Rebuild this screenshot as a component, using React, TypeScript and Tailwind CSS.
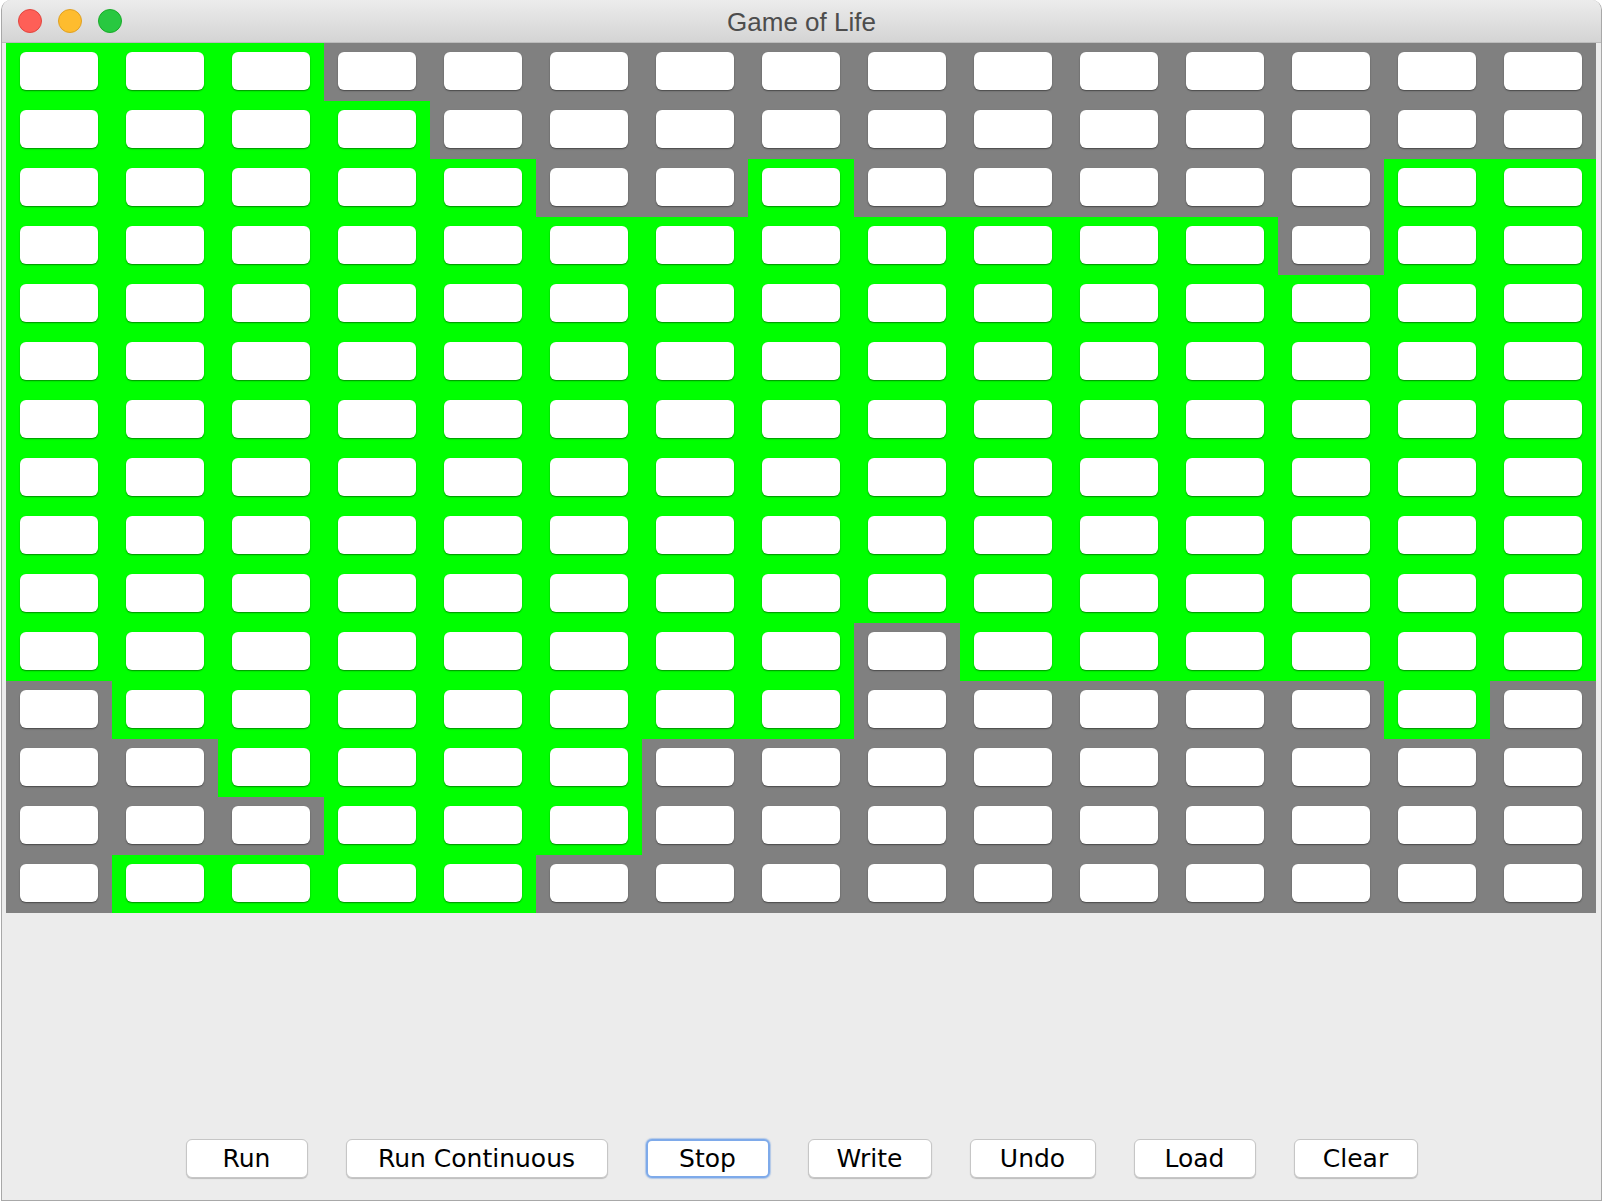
import React from 'react';

// G = live (green), . = dead (gray)
const BOARD = [
  'GGG............',
  'GGGG...........',
  'GGGGG..G.....GG',
  'GGGGGGGGGGGG.GG',
  'GGGGGGGGGGGGGGG',
  'GGGGGGGGGGGGGGG',
  'GGGGGGGGGGGGGGG',
  'GGGGGGGGGGGGGGG',
  'GGGGGGGGGGGGGGG',
  'GGGGGGGGGGGGGGG',
  'GGGGGGGG.GGGGGG',
  '.GGGGGGG.....G.',
  '..GGGG.........',
  '...GGG.........',
  '.GGGG..........',
];

const CONTROLS = [
  { label: 'Run', width: 'w-[122px]' },
  { label: 'Run Continuous', width: 'w-[262px]' },
  { label: 'Stop', width: 'w-[124px]', focused: true },
  { label: 'Write', width: 'w-[124px]' },
  { label: 'Undo', width: 'w-[126px]' },
  { label: 'Load', width: 'w-[122px]' },
  { label: 'Clear', width: 'w-[124px]' },
];

const Cell: React.FC<{ alive: boolean }> = ({ alive }) => (
  <div className={`w-[106px] h-[58px] pl-[14px] pt-[9px] ${alive ? 'bg-[#00ff00]' : 'bg-[#808080]'}`}>
    <div className="w-[78px] h-[38px] rounded-[6px] bg-white shadow-[0_1px_1.5px_rgba(0,0,0,0.45)]" />
  </div>
);

const App: React.FC = () => {
  return (
    <div className="w-[1604px] h-[1202px] bg-white overflow-hidden pl-[1px]">
      <div className="w-[1601px] h-[1201px] flex flex-col bg-[#ececec] rounded-t-[10px] border-l border-r border-b border-[#a8a8a8] overflow-hidden">
        {/* Title bar */}
        <div className="relative h-[43px] shrink-0 bg-gradient-to-b from-[#ececec] to-[#d4d4d4] border-b border-[#bcbcbc] flex items-center justify-center">
          <div className="absolute left-[16px] top-[9px] flex gap-[16px]">
            <div className="w-[24px] h-[24px] rounded-full bg-[#fe5f57] border border-[#e1463f]" />
            <div className="w-[24px] h-[24px] rounded-full bg-[#febc2e] border border-[#dfa023]" />
            <div className="w-[24px] h-[24px] rounded-full bg-[#28c840] border border-[#1aab29]" />
          </div>
          <span className="pt-[3px] text-[26px] text-[#4d4d4d]" style={{ fontFamily: '"Liberation Sans", Arial, sans-serif' }}>
            Game of Life
          </span>
        </div>

        {/* Board */}
        <div className="ml-[4px] flex flex-col w-[1590px] shrink-0">
          {BOARD.map((row, r) => (
            <div key={r} className="flex">
              {row.split('').map((c, i) => (
                <Cell key={i} alive={c === 'G'} />
              ))}
            </div>
          ))}
        </div>

        <div className="h-[226px] shrink-0" />

        {/* Controls */}
        <div className="flex justify-center gap-[38px] h-[39px] shrink-0" style={{ fontFamily: '"DejaVu Sans", Verdana, sans-serif' }}>
          {CONTROLS.map(b => (
            <button
              key={b.label}
              className={`${b.width} h-[39px] rounded-[6px] bg-white text-[25px] text-black leading-none flex items-center justify-center ${
                b.focused
                  ? 'border-2 border-[#7eaaea] shadow-[0_0_1px_1px_rgba(120,165,230,0.5)]'
                  : 'border border-[#c6c6c6] shadow-[0_1px_1px_rgba(0,0,0,0.2)]'
              }`}
            >
              {b.label}
            </button>
          ))}
        </div>
      </div>
    </div>
  );
};

export default App;
